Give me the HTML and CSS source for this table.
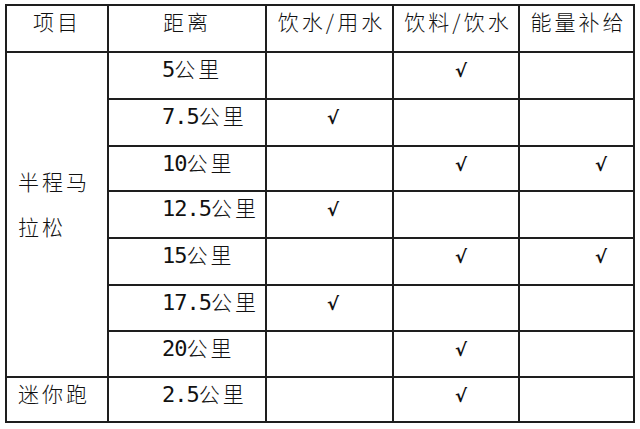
FILE: index.html
```html
<!DOCTYPE html>
<html lang="zh-CN">
<head>
<meta charset="utf-8">
<title>补给站</title>
<link rel="stylesheet" href="styles.css">
</head>
<body>
<div class="page">
  <table class="grid">
    <colgroup>
      <col class="col-item">
      <col class="col-dist">
      <col class="col-water">
      <col class="col-drink">
      <col class="col-energy">
    </colgroup>
    <thead>
      <tr class="head-row">
        <th>项目</th>
        <th>距离</th>
        <th>饮水/用水</th>
        <th>饮料/饮水</th>
        <th>能量补给</th>
      </tr>
    </thead>
    <tbody>
      <tr class="r47">
        <td rowspan="7" class="event">半程马拉松</td>
        <td class="dist"><span class="num">5</span>公里</td>
        <td class="mark water"></td>
        <td class="mark drink">√</td>
        <td class="mark energy"></td>
      </tr>
      <tr class="r47">
        <td class="dist"><span class="num">7.5</span>公里</td>
        <td class="mark water">√</td>
        <td class="mark drink"></td>
        <td class="mark energy"></td>
      </tr>
      <tr class="r45">
        <td class="dist"><span class="num">10</span>公里</td>
        <td class="mark water"></td>
        <td class="mark drink">√</td>
        <td class="mark energy">√</td>
      </tr>
      <tr class="r47">
        <td class="dist"><span class="num">12.5</span>公里</td>
        <td class="mark water">√</td>
        <td class="mark drink"></td>
        <td class="mark energy"></td>
      </tr>
      <tr class="r47">
        <td class="dist"><span class="num">15</span>公里</td>
        <td class="mark water"></td>
        <td class="mark drink">√</td>
        <td class="mark energy">√</td>
      </tr>
      <tr class="r46">
        <td class="dist"><span class="num">17.5</span>公里</td>
        <td class="mark water">√</td>
        <td class="mark drink"></td>
        <td class="mark energy"></td>
      </tr>
      <tr class="r46">
        <td class="dist"><span class="num">20</span>公里</td>
        <td class="mark water"></td>
        <td class="mark drink">√</td>
        <td class="mark energy"></td>
      </tr>
      <tr class="r45">
        <td class="event-single">迷你跑</td>
        <td class="dist"><span class="num">2.5</span>公里</td>
        <td class="mark water"></td>
        <td class="mark drink">√</td>
        <td class="mark energy"></td>
      </tr>
    </tbody>
  </table>
</div>
</body>
</html>
```

FILE: styles.css
```css
html, body {
  margin: 0;
  padding: 0;
  background: #ffffff;
}

.page {
  padding: 4px 0 0 5px;
}

.grid {
  border-collapse: collapse;
  table-layout: fixed;
  width: 628px;
  font-family: "Noto Sans CJK SC", sans-serif;
  font-size: 21px;
  font-weight: 300;
  color: #111111;
  letter-spacing: 3px;
}

.col-item { width: 102px; }
.col-dist { width: 158px; }
.col-water { width: 127px; }
.col-drink { width: 126px; }
.col-energy { width: 115px; }

.grid th,
.grid td {
  border: 2px solid #1e1e1e;
  padding: 0;
  line-height: 30px;
  vertical-align: top;
  box-sizing: border-box;
}

.grid th {
  font-weight: 300;
  text-align: center;
  height: 47px;
  padding-top: 0;
}

.grid .head-row th:nth-child(3),
.grid .head-row th:nth-child(4),
.grid .head-row th:nth-child(5) {
  padding-left: 4px;
}

.r47 td { height: 47px; }
.r46 td { height: 46px; }
.r45 td { height: 45px; }

.grid td.event {
  vertical-align: middle;
  line-height: 45px;
  padding: 0 0 22px 11px;
  text-align: left;
}

.grid td.event-single {
  padding-left: 11px;
  text-align: left;
}

.grid td.dist {
  text-align: left;
  padding-left: 53px;
}

.num {
  font-family: "DejaVu Sans Mono", monospace;
  font-size: 22px;
  font-weight: normal;
  letter-spacing: -1px;
}

.grid td.mark {
  font-family: "DejaVu Sans", sans-serif;
  font-size: 18px;
  font-weight: bold;
  letter-spacing: 0;
  text-align: left;
  padding-top: 3px;
}

.grid td.water { padding-left: 60px; }
.grid td.drink { padding-left: 61px; }
.grid td.energy { padding-left: 75px; }
```
